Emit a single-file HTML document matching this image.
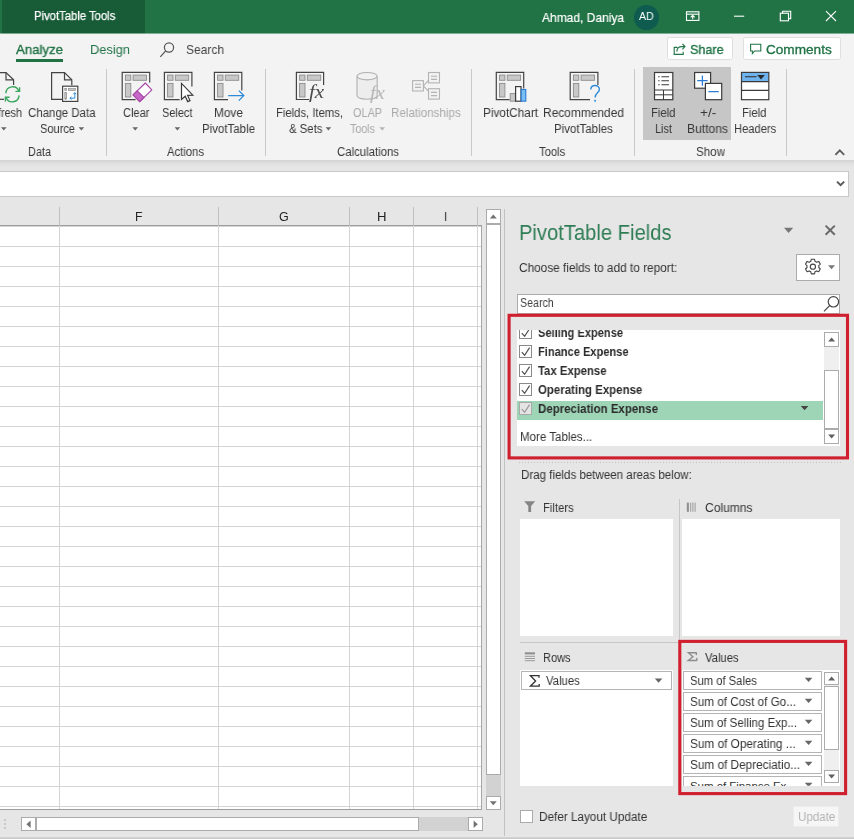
<!DOCTYPE html>
<html><head><meta charset="utf-8"><title>Excel</title>
<style>
html,body{margin:0;padding:0;background:#e6e6e6;}
body{width:854px;height:839px;overflow:hidden;font-family:"Liberation Sans",sans-serif;}
#root{position:relative;width:854px;height:839px;overflow:hidden;background:#e6e6e6;}
#root *{box-sizing:border-box;}
.a{position:absolute;}
span.t{position:absolute;white-space:nowrap;transform-origin:0 50%;will-change:transform;font-family:"Liberation Sans",sans-serif;}
svg{position:absolute;overflow:visible;}

</style></head><body>
<div id="root">
<!-- ===== title bar ===== -->
<div class="a" style="left:0;top:0;width:854px;height:33.4px;background:#217346;"></div>
<div class="a" style="left:1.5px;top:0;width:143.5px;height:33.4px;background:#185c37;"></div>
<div class="a" style="left:634px;top:5px;width:24.6px;height:24.6px;border-radius:50%;background:#0e5c50;"></div>
<!-- ===== ribbon background ===== -->
<div class="a" style="left:0;top:33px;width:854px;height:1px;background:#7fae94;z-index:1;"></div>
<div class="a" style="left:1.5px;top:33px;width:143.5px;height:1px;background:#7aa68e;z-index:1;"></div>
<div class="a" style="left:0;top:33.4px;width:854px;height:126.4px;background:#f3f3f3;"></div>
<div class="a" style="left:0;top:159.8px;width:854px;height:7px;background:linear-gradient(#d2d2d2,#dedede 40%,#e6e6e6);"></div>
<!-- analyze underline -->
<div class="a" style="left:16px;top:59px;width:47px;height:3px;background:#217346;"></div>
<!-- share / comments buttons -->
<div class="a" style="left:666.8px;top:37.4px;width:66.4px;height:22.8px;background:#fff;border:1px solid #dedede;border-radius:2.5px;"></div>
<div class="a" style="left:742.8px;top:37.4px;width:98.4px;height:22.8px;background:#fff;border:1px solid #dedede;border-radius:2.5px;"></div>
<!-- show group highlight -->
<div class="a" style="left:643.2px;top:66.6px;width:87.7px;height:73.2px;background:#c6c6c6;"></div>
<!-- group separators -->
<div class="a" style="left:105.6px;top:69px;width:1px;height:87px;background:#c9c9c9;"></div>
<div class="a" style="left:265px;top:69px;width:1px;height:87px;background:#c9c9c9;"></div>
<div class="a" style="left:470.6px;top:69px;width:1px;height:87px;background:#c9c9c9;"></div>
<div class="a" style="left:633.8px;top:69px;width:1px;height:87px;background:#c9c9c9;"></div>
<div class="a" style="left:786px;top:69px;width:1px;height:87px;background:#c9c9c9;"></div>
<!-- ===== formula bar ===== -->
<div class="a" style="left:-2px;top:171px;width:850.6px;height:26px;background:#fff;border:1px solid #c6c8c8;"></div>
<!-- ===== sheet ===== -->
<div class="a" id="sheet" style="left:0;top:226px;width:481.6px;height:583.6px;background-color:#fff;
 background-image:linear-gradient(#d4d4d4,#d4d4d4),linear-gradient(#d4d4d4,#d4d4d4),linear-gradient(#d4d4d4,#d4d4d4),linear-gradient(#d4d4d4,#d4d4d4),linear-gradient(#d4d4d4,#d4d4d4),linear-gradient(to bottom,#d4d4d4 0,#d4d4d4 1px,transparent 1px,transparent 20px);
 background-size:1px 100%,1px 100%,1px 100%,1px 100%,1px 100%,100% 20px;
 background-position:59px 0,218px 0,349px 0,413px 0,477px 0,0 0;
 background-repeat:no-repeat,no-repeat,no-repeat,no-repeat,no-repeat,repeat-y;"></div>
<!-- header bottom line, sheet right + bottom lines -->
<div class="a" style="left:0;top:225.3px;width:482px;height:1.2px;background:#9d9d9d;"></div>
<div class="a" style="left:481.2px;top:226px;width:1.1px;height:584px;background:#a6a6a6;"></div>
<div class="a" style="left:0;top:809.3px;width:482.3px;height:1.1px;background:#9d9d9d;"></div>
<!-- header column separators -->
<div class="a" style="left:59px;top:207px;width:1px;height:19px;background:#bfbfbf;"></div>
<div class="a" style="left:218px;top:207px;width:1px;height:19px;background:#bfbfbf;"></div>
<div class="a" style="left:349px;top:207px;width:1px;height:19px;background:#bfbfbf;"></div>
<div class="a" style="left:413px;top:207px;width:1px;height:19px;background:#bfbfbf;"></div>
<div class="a" style="left:477px;top:207px;width:1px;height:19px;background:#bfbfbf;"></div>
<!-- vertical scrollbar -->
<div class="a" style="left:485.8px;top:223.6px;width:15px;height:572.8px;background:#d2d2d2;"></div>
<div class="a" style="left:485.8px;top:209.2px;width:15px;height:14.4px;background:#fff;border:1px solid #ababab;"></div>
<div class="a" style="left:485.8px;top:224px;width:15px;height:551.2px;background:#fff;border:1px solid #ababab;"></div>
<div class="a" style="left:485.8px;top:796px;width:15px;height:14.2px;background:#fff;border:1px solid #ababab;"></div>
<!-- horizontal scrollbar -->
<div class="a" style="left:35.4px;top:817px;width:447px;height:14.3px;background:#d2d2d2;"></div>
<div class="a" style="left:21.2px;top:817px;width:14.6px;height:14.3px;background:#fff;border:1px solid #ababab;"></div>
<div class="a" style="left:36.4px;top:817px;width:383px;height:14.3px;background:#fff;border:1px solid #ababab;"></div>
<div class="a" style="left:468.2px;top:817px;width:14.4px;height:14.3px;background:#fff;border:1px solid #ababab;"></div>
<!-- splitter + bottom band -->
<div class="a" style="left:503.8px;top:209.4px;width:1.2px;height:626.6px;background:#c2c2c2;"></div>
<div class="a" style="left:0;top:836.6px;width:854px;height:3px;background:linear-gradient(#d4d4d4,#c2c2c2);"></div>

<!-- ===== pane ===== -->
<!-- gear button -->
<div class="a" style="left:796.1px;top:253.7px;width:43.8px;height:27px;background:#fff;border:1px solid #ababab;"></div>
<!-- search box -->
<div class="a" style="left:517px;top:294.2px;width:323px;height:19.4px;background:#fff;border:1px solid #ababab;"></div>
<!-- field list box -->
<div class="a" style="left:517px;top:329.6px;width:323.2px;height:116.4px;background:#fff;"></div>
<div class="a" style="left:517px;top:400.8px;width:306px;height:19px;background:#9fd5b7;"></div>
<!-- field list scrollbar -->
<div class="a" style="left:824.3px;top:332.3px;width:14.6px;height:111.4px;background:#efefef;"></div>
<div class="a" style="left:824.3px;top:332.3px;width:14.6px;height:14.4px;background:#fff;border:1px solid #ababab;"></div>
<div class="a" style="left:824.3px;top:370px;width:14.6px;height:58.8px;background:#fff;border:1px solid #ababab;"></div>
<div class="a" style="left:824.3px;top:429.3px;width:14.6px;height:14.4px;background:#fff;border:1px solid #ababab;"></div>
<!-- dotted separator -->
<div class="a" style="left:518.6px;top:462.2px;width:322px;height:1px;background-image:repeating-linear-gradient(to right,#c0c0c0 0,#c0c0c0 1px,transparent 1px,transparent 3px);"></div>
<!-- area boxes -->
<div class="a" style="left:520.2px;top:519.2px;width:152.4px;height:116.6px;background:#fff;"></div>
<div class="a" style="left:682px;top:519px;width:158.2px;height:116.8px;background:#fff;"></div>
<div class="a" style="left:520.2px;top:669.6px;width:152.8px;height:116.2px;background:#fff;"></div>
<div class="a" style="left:682px;top:669.6px;width:158.2px;height:116.2px;background:#fff;"></div>
<!-- area separators -->
<div class="a" style="left:679.3px;top:499px;width:1.1px;height:142px;background:#c6c6c6;"></div>
<div class="a" style="left:520.2px;top:641.9px;width:158px;height:1.1px;background:#c6c6c6;"></div>
<!-- rows item -->
<div class="a" style="left:521px;top:671px;width:150.6px;height:19.4px;background:#fff;border:1px solid #b4b4b4;"></div>
<!-- values items (clipped) -->
<div class="a" style="left:682px;top:669px;width:142px;height:116.8px;overflow:hidden;">
  <div class="a" style="left:1.2px;top:2px;width:138.8px;height:19px;background:#fff;border:1px solid #b4b4b4;"></div>
  <div class="a" style="left:1.2px;top:23px;width:138.8px;height:19px;background:#fff;border:1px solid #b4b4b4;"></div>
  <div class="a" style="left:1.2px;top:44px;width:138.8px;height:19px;background:#fff;border:1px solid #b4b4b4;"></div>
  <div class="a" style="left:1.2px;top:65px;width:138.8px;height:19px;background:#fff;border:1px solid #b4b4b4;"></div>
  <div class="a" style="left:1.2px;top:86px;width:138.8px;height:19px;background:#fff;border:1px solid #b4b4b4;"></div>
  <div class="a" style="left:1.2px;top:107px;width:138.8px;height:19px;background:#fff;border:1px solid #b4b4b4;"></div>
  <span class="a" style="left:8px;top:106.2px;font-size:11.5px;line-height:23px;color:#333;white-space:nowrap;letter-spacing:-0.05px;">Sum of Finance Ex...</span>
</div>
<!-- values scrollbar -->
<div class="a" style="left:824.4px;top:671.6px;width:14.4px;height:111.8px;background:#efefef;"></div>
<div class="a" style="left:824.4px;top:671.6px;width:14.4px;height:13.8px;background:#fff;border:1px solid #ababab;"></div>
<div class="a" style="left:824.4px;top:685.6px;width:14.4px;height:64.8px;background:#fff;border:1px solid #ababab;"></div>
<div class="a" style="left:824.4px;top:769.6px;width:14.4px;height:13.8px;background:#fff;border:1px solid #ababab;"></div>
<!-- defer checkbox, update btn -->
<div class="a" style="left:520.2px;top:810.4px;width:12.6px;height:12.4px;background:#fff;border:1px solid #ababab;"></div>
<div class="a" style="left:793px;top:806px;width:46.4px;height:21.2px;background:#f6f6f6;border:1px solid #ececec;"></div>
<!-- field checkboxes (clipped container) -->
<div class="a" style="left:517px;top:329.6px;width:30px;height:100px;overflow:hidden;">
  <div class="a" style="left:2.2px;top:-3.4px;width:12.6px;height:12.6px;background:#fff;border:1px solid #8a8a8a;"></div>
  <div class="a" style="left:2.2px;top:15.6px;width:12.6px;height:12.6px;background:#fff;border:1px solid #8a8a8a;"></div>
  <div class="a" style="left:2.2px;top:34.6px;width:12.6px;height:12.6px;background:#fff;border:1px solid #8a8a8a;"></div>
  <div class="a" style="left:2.2px;top:53.6px;width:12.6px;height:12.6px;background:#fff;border:1px solid #8a8a8a;"></div>
  <div class="a" style="left:2.2px;top:72.6px;width:12.6px;height:12.6px;background:#e4e4e4;border:1px solid #a8a8a8;"></div>
  <svg width="30" height="100" viewBox="0 0 30 100" style="left:0;top:0;overflow:hidden;" fill="none" stroke="#505050" stroke-width="1.15">
    <path d="M4.8 3.2 L7.6 6.2 L12.6 -1.4"/>
    <path d="M4.8 22.2 L7.6 25.2 L12.6 17.6"/>
    <path d="M4.8 41.2 L7.6 44.2 L12.6 36.6"/>
    <path d="M4.8 60.2 L7.6 63.2 L12.6 55.6"/>
    <path d="M4.8 79.2 L7.6 82.2 L12.6 74.6" stroke="#9a9a9a"/>
  </svg>
</div>
<!-- cover strip that clips the partially scrolled first row -->
<div class="a" style="left:512px;top:318px;width:333px;height:11.6px;background:#e6e6e6;z-index:5;"></div>
<!-- ===== ICON OVERLAY ===== -->
<svg id="icons" width="854" height="839" viewBox="0 0 854 839" style="left:0;top:0;" fill="none">
<defs>
  <g id="ptin">
    <rect x="3.4" y="2.9" width="5.4" height="5.2" fill="#c8c8c8" stroke="#8c8c8c" stroke-width="0.9"/>
    <rect x="11.1" y="2.9" width="13.4" height="5.2" fill="#c8c8c8" stroke="#8c8c8c" stroke-width="0.9"/>
    <rect x="3.4" y="11.2" width="5.4" height="13.6" fill="#c8c8c8" stroke="#8c8c8c" stroke-width="0.9"/>
  </g>
  <path id="arD" d="M0 0 L7 0 L3.5 4 Z"/>
</defs>
<!-- title bar window controls -->
<g stroke="#fff" stroke-width="1.1">
  <rect x="686.5" y="11.8" width="12.4" height="8.6"/>
  <path d="M686.5 14.2 H698.9"/>
  <path d="M692.7 19.3 V15.6 M690.7 17.4 L692.7 15.4 L694.7 17.4"/>
  <path d="M734 16.2 H744.2"/>
  <rect x="780.3" y="13.2" width="8.2" height="7.6" />
  <path d="M782.6 13.2 V11.2 H790.7 V18.6 H788.6"/>
  <path d="M826 11.2 L836 21 M836 11.2 L826 21"/>
</g>
<!-- tab-row search icon -->
<g stroke="#555" stroke-width="1.2">
  <circle cx="169" cy="47.5" r="4.6"/>
  <path d="M165.7 50.9 L160.3 56.8"/>
</g>
<!-- share icon -->
<g stroke="#217346" stroke-width="1.1">
  <path d="M677.6 47.4 H674.2 V54.4 H683.2 V51.8"/>
  <path d="M676.8 51.6 C677 48.2 679 46.6 681.6 46.6 H684.6 M682.4 43.8 L685 46.6 L682.4 49.4"/>
</g>
<!-- comments icon -->
<path d="M750.6 44.2 H760.8 V51 H754.6 L752.4 53.6 V51 H750.6 Z" stroke="#217346" stroke-width="1.1"/>
<!-- ribbon dropdown arrows -->
<g fill="#666">
  <use href="#arD" transform="translate(1,127.2) scale(0.8)"/>
  <use href="#arD" transform="translate(78.6,127.2) scale(0.8)"/>
  <use href="#arD" transform="translate(132.4,127.2) scale(0.8)"/>
  <use href="#arD" transform="translate(174.6,127.2) scale(0.8)"/>
  <use href="#arD" transform="translate(325.6,127.2) scale(0.8)"/>
</g>
<use href="#arD" transform="translate(379.4,127.2) scale(0.8)" fill="#b4b4b4"/>
<!-- refresh icon -->
<g stroke="#444" stroke-width="1.2">
  <path d="M-2 72.6 H6 L13.6 79.8 V85"/>
  <path d="M6 72.6 V79.8 H13.6"/>
  <path d="M-2 99.3 H4"/>
</g>
<g stroke="#3aa55d" stroke-width="1.35" stroke-linecap="butt" stroke-linejoin="miter">
  <path d="M5.9 93.2 A6.7 6.7 0 0 1 18.9 91.2"/>
  <path d="M19.6 87.2 V91.4 H15.4"/>
  <path d="M19.1 95.4 A6.7 6.7 0 0 1 6.1 97.4"/>
  <path d="M5.4 101.4 V97.2 H9.6"/>
</g>
<!-- change data source icon -->
<g stroke="#444" stroke-width="1.2">
  <path d="M62 99.4 H51.6 V72.6 H64.5 L71.8 79.8 V85.2"/>
  <path d="M64.5 72.6 V79.8 H71.8"/>
  <rect x="62.6" y="86.2" width="15.2" height="15.2" fill="#fff"/>
</g>
<g fill="#c8c8c8" stroke="#8c8c8c" stroke-width="0.7">
  <rect x="64.8" y="88.6" width="1.8" height="1.8"/>
  <rect x="68.4" y="88.6" width="7.2" height="1.8"/>
  <rect x="64.8" y="92.4" width="1.8" height="6.8"/>
</g>
<g stroke="#2e8bd8" stroke-width="1">
  <path d="M69.9 98.2 H74.8 V92.7"/>
  <path d="M71.4 96.7 L69.9 98.2 L71.4 99.7 M73.3 94.2 L74.8 92.7 L76.3 94.2"/>
</g>
<!-- clear icon -->
<g transform="translate(122,72.2)"><use href="#ptin"/></g>
<path d="M135.6 99.6 H122.2 V72.3 H149.7 V82.6" stroke="#444" stroke-width="1.2"/>
<g stroke="#a445a4" stroke-width="1.1" stroke-linejoin="round">
  <path d="M145.3 83 L151.8 89.8 L139.7 101.6 L133.1 94.8 Z" fill="#fff"/>
  <path d="M137.2 90.9 L144 97.5 L139.7 101.6 L133.1 94.8 Z" fill="#c868c8"/>
</g>
<!-- select icon -->
<g transform="translate(164.2,72.2)"><use href="#ptin"/></g>
<path d="M179.6 99.6 H164.4 V72.3 H191.9 V86.6" stroke="#444" stroke-width="1.2"/>
<path d="M181.5 83.4 V99.4 L185.2 96.2 L187.7 101.6 L190 100.6 L187.6 95.4 L192.8 95.2 Z" fill="#fff" stroke="#3b3b3b" stroke-width="1.2" stroke-linejoin="miter"/>
<!-- move icon -->
<g transform="translate(214.2,72.2)"><use href="#ptin"/></g>
<path d="M228 99.6 H214.4 V72.3 H241.8 V90.6" stroke="#444" stroke-width="1.2"/>
<path d="M228.2 95.6 H243.6 M238.8 90.6 L243.8 95.6 L238.8 100.6" stroke="#2e8bd8" stroke-width="1.3"/>
<!-- fields items sets icon -->
<g transform="translate(296.2,72.2)"><use href="#ptin"/></g>
<path d="M309 99.5 H296.4 V72.3 H323.6 V85" stroke="#444" stroke-width="1.2"/>
<!-- OLAP icon -->
<g stroke="#b0b0b0" stroke-width="1.1">
  <path d="M357 76.2 V95.6 C357 100.4 377.2 100.4 377.2 95.6 V76.2" fill="#ededed"/>
  <ellipse cx="367.1" cy="76.2" rx="10.1" ry="3.7" fill="#f1f1f1"/>
</g>
<!-- relationships icon -->
<g stroke="#b4b4b4" stroke-width="1.1" fill="#f1f1f1">
  <rect x="412.6" y="80.6" width="10.8" height="10.4"/>
  <rect x="428.5" y="72.5" width="11" height="10.4"/>
  <rect x="428.5" y="88.7" width="11" height="10.4"/>
  <path d="M423.4 85.8 L428.5 80.4 M423.4 85.8 L428.5 91.4" fill="none"/>
  <path d="M415 84.2 H421 M415 87.4 H421 M431 76.2 H437 M431 79.4 H437 M431 92.4 H437 M431 95.6 H437" fill="none"/>
</g>
<!-- pivotchart icon -->
<g transform="translate(496.1,72.2)"><use href="#ptin"/></g>
<path d="M509.6 99.7 H496.3 V72.3 H523.7 V88.6" stroke="#444" stroke-width="1.2"/>
<rect x="510.2" y="93.6" width="5.2" height="7.6" fill="#c8c8c8" stroke="#8c8c8c" stroke-width="0.9"/>
<rect x="515.6" y="86.6" width="5.4" height="14.6" fill="#fff" stroke="#3b3b3b" stroke-width="1.2"/>
<rect x="521.2" y="89.5" width="4.6" height="11.7" fill="#79bdf2" stroke="#2b7cd3" stroke-width="1.1"/>
<!-- recommended icon -->
<g transform="translate(570,72.2)"><use href="#ptin"/></g>
<path d="M590 99.7 H570.2 V72.3 H597.9 V85" stroke="#444" stroke-width="1.2"/>
<path d="M590.8 89.6 C590.8 84.2 599.4 84.2 599.4 89.4 C599.4 92.8 595.1 93 595.1 97.6" stroke="#2e8bd8" stroke-width="1.4"/><circle cx="595.1" cy="100.8" r="1" fill="#2e8bd8"/>
<!-- field list icon -->
<g stroke="#3b3b3b" stroke-width="1.2">
  <rect x="654.5" y="72.5" width="18.3" height="27.2" fill="#fff"/>
  <path d="M654.5 90 H672.8 M654.5 94.8 H672.8 M663.5 90 V99.7" stroke-width="1"/>
  <path d="M658.2 76.7 H659.6 M661.4 76.7 H669 M658.2 80.7 H659.6 M661.4 80.7 H669 M658.2 84.7 H659.6 M661.4 84.7 H669" stroke-width="1.1"/>
</g>
<!-- +/- buttons icon -->
<g stroke="#3b3b3b" stroke-width="1.2" fill="#fff">
  <rect x="694.6" y="72.5" width="16" height="15.7"/>
  <rect x="705.4" y="83.4" width="16.3" height="16.3"/>
</g>
<path d="M697.2 80.6 H707.6 M702.4 75.4 V85.8 M708.4 91.6 H718.8" stroke="#2b7cd3" stroke-width="1.3"/>
<!-- field headers icon -->
<rect x="741.5" y="72.4" width="27.3" height="27.3" fill="#fff"/>
<rect x="741.5" y="72.4" width="27.3" height="9.3" fill="#6fb3ee"/>
<g stroke="#3b3b3b" stroke-width="1.2">
  <rect x="741.5" y="72.4" width="27.3" height="27.3"/>
  <path d="M741.5 81.7 H768.8 M741.5 90.4 H768.8"/>
  <path d="M745 76.7 H756.6"/>
</g>
<path d="M757.2 75 H764.8 L761 79.6 Z" fill="#2b2b2b"/>
<!-- ribbon collapse chevron -->
<path d="M835.4 154.8 L839.8 150.4 L844.2 154.8" stroke="#5e5e5e" stroke-width="1.9"/>
<!-- formula bar chevron -->
<path d="M837 181.6 L840.6 185.2 L844.2 181.6" stroke="#5a5a5a" stroke-width="2"/>
<!-- sheet scrollbar arrows -->
<g fill="#727272">
  <path d="M489.8 218.6 L493.3 214.6 L496.8 218.6 Z"/>
  <path d="M489.8 801.2 L493.3 805.2 L496.8 801.2 Z"/>
  <path d="M30.6 820.4 L26.4 824.2 L30.6 828 Z"/>
  <path d="M473.6 820.4 L477.8 824.2 L473.6 828 Z"/>
</g>
<g fill="#b9b9b9">
  <rect x="4.2" y="819.4" width="1.6" height="1.6"/><rect x="4.2" y="823.2" width="1.6" height="1.6"/><rect x="4.2" y="827" width="1.6" height="1.6"/>
</g>
<!-- pane header icons -->
<path d="M784 227.8 H793.2 L788.6 233 Z" fill="#777"/>
<path d="M825.6 225.6 L834.8 234.8 M834.8 225.6 L825.6 234.8" stroke="#6a6a6a" stroke-width="2"/>
<!-- gear -->
<g stroke="#444" stroke-width="1.1" stroke-linejoin="round">
  <path id="gear" d="M811.3 259.2 h3.2 l0.5 2.1 l1.7 0.9 l2-0.8 l1.6 2.7 l-1.5 1.5 v1.9 l1.5 1.5 l-1.6 2.7 l-2-0.8 l-1.7 0.9 l-0.5 2.1 h-3.2 l-0.5-2.1 l-1.7-0.9 l-2 0.8 l-1.6-2.7 l1.5-1.5 v-1.9 l-1.5-1.5 l1.6-2.7 l2 0.8 l1.7-0.9 Z"/>
  <circle cx="812.9" cy="266.7" r="2.6"/>
</g>
<path d="M828 265.2 H835 L831.5 269.2 Z" fill="#777"/>
<!-- pane search magnifier -->
<g stroke="#444" stroke-width="1.2">
  <circle cx="833.4" cy="301.8" r="5.2"/>
  <path d="M829.6 305.6 L824 311.4"/>
</g>
<path d="M800.8 406 H808.4 L804.6 410.2 Z" fill="#444"/>
<!-- field list scroll arrows -->
<g fill="#606060">
  <path d="M828.1 341.6 L831.6 337.6 L835.1 341.6 Z"/>
  <path d="M828.1 434.6 L831.6 438.6 L835.1 434.6 Z"/>
  <path d="M828.1 680.6 L831.6 676.6 L835.1 680.6 Z"/>
  <path d="M828.1 774.6 L831.6 778.6 L835.1 774.6 Z"/>
</g>
<!-- area header icons -->
<path d="M524.2 501.2 H535.2 L531.1 506 V512 H528.3 V506 Z" fill="#858585"/>
<rect x="686.8" y="502.6" width="2.1" height="9.2" fill="#8f8f8f"/><path d="M690.7 502.6 V511.8 M692.9 502.6 V511.8 M695.1 502.6 V511.8" stroke="#9a9a9a" stroke-width="1"/>
<rect x="524.8" y="652.3" width="10.2" height="2.1" fill="#8f8f8f"/><path d="M524.8 656.3 H535 M524.8 658.5 H535 M524.8 660.7 H535" stroke="#9a9a9a" stroke-width="1"/>
<path d="M696.5 655.2 L696.2 652.7 H688.4 L692.9 656.7 L688.2 660.5 H696.6 L697 657.9" stroke="#8c8c8c" stroke-width="1.35" stroke-linejoin="miter"/>
<path d="M539 677.8 V675.6 H530.4 L535.6 681 L530.4 686.2 H539.2 V684" stroke="#333" stroke-width="1.3" stroke-linejoin="miter"/>
<!-- area item arrows -->
<g fill="#666">
  <path d="M654.8 678.6 H662.4 L658.6 682.8 Z"/>
  <path d="M804.8 677.8 H812.4 L808.6 682 Z"/>
  <path d="M804.8 698.8 H812.4 L808.6 703 Z"/>
  <path d="M804.8 719.8 H812.4 L808.6 724 Z"/>
  <path d="M804.8 740.8 H812.4 L808.6 745 Z"/>
  <path d="M804.8 761.8 H812.4 L808.6 766 Z"/>
  <path d="M804.8 782.8 H812.4 L809.6 785.8 H807.6 Z"/>
</g>
<!-- red annotation boxes -->
<rect x="509.1" y="315.3" width="338.4" height="142.6" stroke="#d01f2e" stroke-width="3.1"/>
<rect x="679.8" y="641.4" width="165.8" height="152.2" stroke="#d01f2e" stroke-width="3.1"/>
</svg>

<span class="t" id="t0" style="left:33.50px;top:3.84px;font-size:12.3px;line-height:24.6px;color:#fff;transform:scaleX(0.9172);-webkit-text-stroke:0.25px #fff;">PivotTable Tools</span>
<span class="t" id="t1" style="left:541.50px;top:4.93px;font-size:13.2px;line-height:26.4px;color:#fff;transform:scaleX(0.9105);-webkit-text-stroke:0.2px #fff;">Ahmad, Daniya</span>
<span class="t" id="t2" style="left:638.80px;top:6.36px;font-size:10.8px;line-height:21.6px;color:#fff;transform:scaleX(0.9733);">AD</span>
<span class="t" id="t3" style="left:16.00px;top:36.42px;font-size:13.5px;line-height:27.0px;color:#217346;transform:scaleX(0.9785);-webkit-text-stroke:0.35px currentColor;">Analyze</span>
<span class="t" id="t4" style="left:90.00px;top:36.42px;font-size:13.5px;line-height:27.0px;color:#217346;transform:scaleX(0.9517);">Design</span>
<span class="t" id="t5" style="left:186.40px;top:36.42px;font-size:13.5px;line-height:27.0px;color:#444;transform:scaleX(0.8906);">Search</span>
<span class="t" id="t6" style="left:690.20px;top:36.42px;font-size:13.5px;line-height:27.0px;color:#217346;transform:scaleX(0.9325);-webkit-text-stroke:0.35px currentColor;">Share</span>
<span class="t" id="t7" style="left:766.30px;top:36.42px;font-size:13.5px;line-height:27.0px;color:#217346;transform:scaleX(1.0067);-webkit-text-stroke:0.35px currentColor;">Comments</span>
<span class="t" id="t8" style="left:-2.00px;top:101.34px;font-size:12.3px;line-height:24.6px;color:#383838;transform:scaleX(0.8777);">fresh</span>
<span class="t" id="t9" style="left:28.00px;top:101.34px;font-size:12.3px;line-height:24.6px;color:#383838;transform:scaleX(0.9314);">Change Data</span>
<span class="t" id="t10" style="left:40.00px;top:117.14px;font-size:12.3px;line-height:24.6px;color:#383838;transform:scaleX(0.8982);">Source</span>
<span class="t" id="t11" style="left:28.00px;top:140.34px;font-size:12.3px;line-height:24.6px;color:#383838;transform:scaleX(0.8851);">Data</span>
<span class="t" id="t12" style="left:122.50px;top:101.34px;font-size:12.3px;line-height:24.6px;color:#383838;transform:scaleX(0.9016);">Clear</span>
<span class="t" id="t13" style="left:162.00px;top:101.34px;font-size:12.3px;line-height:24.6px;color:#383838;transform:scaleX(0.8921);">Select</span>
<span class="t" id="t14" style="left:167.00px;top:140.34px;font-size:12.3px;line-height:24.6px;color:#383838;transform:scaleX(0.9175);">Actions</span>
<span class="t" id="t15" style="left:214.00px;top:101.34px;font-size:12.3px;line-height:24.6px;color:#383838;transform:scaleX(0.9642);">Move</span>
<span class="t" id="t16" style="left:202.00px;top:117.14px;font-size:12.3px;line-height:24.6px;color:#383838;transform:scaleX(0.9339);">PivotTable</span>
<span class="t" id="t17" style="left:276.00px;top:101.34px;font-size:12.3px;line-height:24.6px;color:#383838;transform:scaleX(0.9162);">Fields, Items,</span>
<span class="t" id="t18" style="left:289.00px;top:117.14px;font-size:12.3px;line-height:24.6px;color:#383838;transform:scaleX(0.9245);">&amp; Sets</span>
<span class="t" id="t19" style="left:353.00px;top:101.34px;font-size:12.3px;line-height:24.6px;color:#a9a9a9;transform:scaleX(0.8838);">OLAP</span>
<span class="t" id="t20" style="left:350.00px;top:117.14px;font-size:12.3px;line-height:24.6px;color:#a9a9a9;transform:scaleX(0.8705);">Tools</span>
<span class="t" id="t21" style="left:391.00px;top:101.34px;font-size:12.3px;line-height:24.6px;color:#a9a9a9;transform:scaleX(0.9448);">Relationships</span>
<span class="t" id="t22" style="left:337.00px;top:140.34px;font-size:12.3px;line-height:24.6px;color:#383838;transform:scaleX(0.9254);">Calculations</span>
<span class="t" id="t23" style="left:482.50px;top:101.34px;font-size:12.3px;line-height:24.6px;color:#383838;transform:scaleX(0.9578);">PivotChart</span>
<span class="t" id="t24" style="left:543.00px;top:101.34px;font-size:12.3px;line-height:24.6px;color:#383838;transform:scaleX(0.9713);">Recommended</span>
<span class="t" id="t25" style="left:553.75px;top:117.14px;font-size:12.3px;line-height:24.6px;color:#383838;transform:scaleX(0.9342);">PivotTables</span>
<span class="t" id="t26" style="left:538.75px;top:140.34px;font-size:12.3px;line-height:24.6px;color:#383838;transform:scaleX(0.9140);">Tools</span>
<span class="t" id="t27" style="left:651.00px;top:101.34px;font-size:12.3px;line-height:24.6px;color:#383838;transform:scaleX(0.9191);">Field</span>
<span class="t" id="t28" style="left:655.00px;top:117.14px;font-size:12.3px;line-height:24.6px;color:#383838;transform:scaleX(0.8882);">List</span>
<span class="t" id="t29" style="left:699.60px;top:101.34px;font-size:12.3px;line-height:24.6px;color:#383838;transform:scaleX(1.1154);">+/-</span>
<span class="t" id="t30" style="left:687.00px;top:117.14px;font-size:12.3px;line-height:24.6px;color:#383838;transform:scaleX(0.9831);">Buttons</span>
<span class="t" id="t31" style="left:742.00px;top:101.34px;font-size:12.3px;line-height:24.6px;color:#383838;transform:scaleX(0.9191);">Field</span>
<span class="t" id="t32" style="left:733.80px;top:117.14px;font-size:12.3px;line-height:24.6px;color:#383838;transform:scaleX(0.9078);">Headers</span>
<span class="t" id="t33" style="left:696.00px;top:140.34px;font-size:12.3px;line-height:24.6px;color:#383838;transform:scaleX(0.9426);">Show</span>
<span class="t" id="t34" style="left:134.60px;top:204.57px;font-size:12.5px;line-height:25.0px;color:#222;transform:scaleX(0.9685);">F</span>
<span class="t" id="t35" style="left:279.30px;top:204.57px;font-size:12.5px;line-height:25.0px;color:#222;transform:scaleX(0.9965);">G</span>
<span class="t" id="t36" style="left:376.50px;top:204.57px;font-size:12.5px;line-height:25.0px;color:#222;transform:scaleX(1.0519);">H</span>
<span class="t" id="t37" style="left:443.50px;top:204.57px;font-size:12.5px;line-height:25.0px;color:#222;transform:scaleX(0.8610);">I</span>
<span class="t" id="t38" style="left:518.75px;top:211.37px;font-size:22.3px;line-height:44.6px;color:#2f7d55;transform:scaleX(0.9048);">PivotTable Fields</span>
<span class="t" id="t39" style="left:518.75px;top:255.94px;font-size:12.3px;line-height:24.6px;color:#333;transform:scaleX(0.9605);">Choose fields to add to report:</span>
<span class="t" id="t40" style="left:519.50px;top:290.69px;font-size:12.3px;line-height:24.6px;color:#444;transform:scaleX(0.8661);">Search</span>
<span class="t" id="t41" style="left:538.25px;top:321.19px;font-size:12.3px;line-height:24.6px;color:#2b2b2b;transform:scaleX(0.9013);font-weight:bold;">Selling Expense</span>
<span class="t" id="t42" style="left:538.25px;top:340.19px;font-size:12.3px;line-height:24.6px;color:#2b2b2b;transform:scaleX(0.9008);font-weight:bold;">Finance Expense</span>
<span class="t" id="t43" style="left:538.25px;top:359.19px;font-size:12.3px;line-height:24.6px;color:#2b2b2b;transform:scaleX(0.9222);font-weight:bold;">Tax Expense</span>
<span class="t" id="t44" style="left:538.25px;top:378.19px;font-size:12.3px;line-height:24.6px;color:#2b2b2b;transform:scaleX(0.9302);font-weight:bold;">Operating Expense</span>
<span class="t" id="t45" style="left:538.25px;top:397.19px;font-size:12.3px;line-height:24.6px;color:#2b2b2b;transform:scaleX(0.9340);font-weight:bold;">Depreciation Expense</span>
<span class="t" id="t46" style="left:519.50px;top:424.54px;font-size:12.3px;line-height:24.6px;color:#333;transform:scaleX(0.9381);">More Tables...</span>
<span class="t" id="t47" style="left:521.25px;top:463.19px;font-size:12.3px;line-height:24.6px;color:#333;transform:scaleX(0.9391);">Drag fields between areas below:</span>
<span class="t" id="t48" style="left:543.00px;top:495.94px;font-size:12.3px;line-height:24.6px;color:#333;transform:scaleX(0.9183);">Filters</span>
<span class="t" id="t49" style="left:705.40px;top:495.94px;font-size:12.3px;line-height:24.6px;color:#333;transform:scaleX(0.9808);">Columns</span>
<span class="t" id="t50" style="left:543.40px;top:646.14px;font-size:12.3px;line-height:24.6px;color:#333;transform:scaleX(0.8976);">Rows</span>
<span class="t" id="t51" style="left:705.40px;top:646.14px;font-size:12.3px;line-height:24.6px;color:#333;transform:scaleX(0.9158);">Values</span>
<span class="t" id="t52" style="left:546.00px;top:669.24px;font-size:12.3px;line-height:24.6px;color:#333;transform:scaleX(0.9213);">Values</span>
<span class="t" id="t53" style="left:690.00px;top:669.24px;font-size:12.3px;line-height:24.6px;color:#333;transform:scaleX(0.9133);">Sum of Sales</span>
<span class="t" id="t54" style="left:690.00px;top:690.24px;font-size:12.3px;line-height:24.6px;color:#333;transform:scaleX(0.9515);">Sum of Cost of Go...</span>
<span class="t" id="t55" style="left:690.00px;top:711.24px;font-size:12.3px;line-height:24.6px;color:#333;transform:scaleX(0.9373);">Sum of Selling Exp...</span>
<span class="t" id="t56" style="left:690.00px;top:732.24px;font-size:12.3px;line-height:24.6px;color:#333;transform:scaleX(0.9596);">Sum of Operating ...</span>
<span class="t" id="t57" style="left:690.00px;top:753.24px;font-size:12.3px;line-height:24.6px;color:#333;transform:scaleX(0.9580);">Sum of Depreciatio...</span>
<span class="t" id="t58" style="left:539.00px;top:805.34px;font-size:12.3px;line-height:24.6px;color:#333;transform:scaleX(0.9534);">Defer Layout Update</span>
<span class="t" id="t59" style="left:797.70px;top:804.64px;font-size:12.3px;line-height:24.6px;color:#b2b2b2;transform:scaleX(0.9406);">Update</span>
<span class="t" id="t60" style="left:308.60px;top:71.74px;font-size:19.8px;line-height:39.6px;color:#4a4a4a;transform:scaleX(1.0643);font-family:'Liberation Serif',serif;font-style:italic;">fx</span>
<span class="t" id="t61" style="left:369.60px;top:73.04px;font-size:19.8px;line-height:39.6px;color:#b6b6b6;transform:scaleX(1.0363);font-family:'Liberation Serif',serif;font-style:italic;">fx</span>
</div>
</body></html>
